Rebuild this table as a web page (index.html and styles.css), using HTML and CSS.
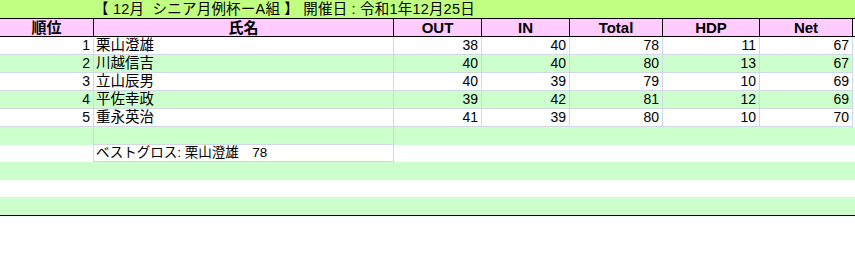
FILE: index.html
```html
<!DOCTYPE html>
<html lang="ja">
<head>
<meta charset="utf-8">
<title>12月 シニア月例杯ーA組</title>
<link rel="stylesheet" href="styles.css">
</head>
<body>
<div class="sheet">
  <div class="title"><span class="title-text">【 12月&nbsp; シニア月例杯ーA組 】 開催日 : 令和1年12月25日</span></div>
  <div class="row head">
    <div class="c">順位</div>
    <div class="c">氏名</div>
    <div class="c">OUT</div>
    <div class="c">IN</div>
    <div class="c">Total</div>
    <div class="c">HDP</div>
    <div class="c">Net</div>
  </div>
  <div class="row data">
    <div class="c num">1</div><div class="c name">栗山澄雄</div><div class="c num">38</div><div class="c num">40</div><div class="c num">78</div><div class="c num">11</div><div class="c num">67</div>
  </div>
  <div class="row data alt">
    <div class="c num">2</div><div class="c name">川越信吉</div><div class="c num">40</div><div class="c num">40</div><div class="c num">80</div><div class="c num">13</div><div class="c num">67</div>
  </div>
  <div class="row data">
    <div class="c num">3</div><div class="c name">立山辰男</div><div class="c num">40</div><div class="c num">39</div><div class="c num">79</div><div class="c num">10</div><div class="c num">69</div>
  </div>
  <div class="row data alt">
    <div class="c num">4</div><div class="c name">平佐幸政</div><div class="c num">39</div><div class="c num">42</div><div class="c num">81</div><div class="c num">12</div><div class="c num">69</div>
  </div>
  <div class="row data">
    <div class="c num">5</div><div class="c name">重永英治</div><div class="c num">41</div><div class="c num">39</div><div class="c num">80</div><div class="c num">10</div><div class="c num">70</div>
  </div>
  <div class="row extra band tall">
    <div class="c rank-gap"></div><div class="c name boxed"></div>
  </div>
  <div class="row extra short">
    <div class="c rank-gap"></div><div class="c name boxed best">ベストグロス: 栗山澄雄　78</div>
  </div>
  <div class="row extra band tall"></div>
  <div class="row extra short"></div>
  <div class="row extra band tall last"></div>
</div>
</body>
</html>
```

FILE: styles.css
```css
html, body {
  margin: 0;
  padding: 0;
  background: #ffffff;
}

body {
  font-family: "Liberation Sans", "Noto Sans CJK JP", sans-serif;
  font-size: 14px;
  color: #000000;
}

.sheet {
  width: 855px;
}

.title {
  height: 18px;
  background: #c0ff80;
  padding-left: 94px;
  line-height: 18px;
  white-space: nowrap;
}

.title-text {
  font-size: 14.5px;
  letter-spacing: 0.2px;
}

.row {
  display: grid;
  grid-template-columns: 94px 300px 88px 88px 93px 97px 93px;
}

.c {
  box-sizing: border-box;
  white-space: nowrap;
  overflow: hidden;
}

.head {
  height: 19px;
  border-top: 1px solid #000;
  border-bottom: 1px solid #000;
  box-sizing: border-box;
}

.head .c {
  background: #ffccff;
  border-right: 1px solid #000;
  text-align: center;
  font-weight: bold;
  font-size: 15px;
  line-height: 17px;
}

.data {
  height: 18px;
}

.data .c {
  border-right: 1px solid #d0d7e5;
  border-bottom: 1px solid #d0d7e5;
  line-height: 17px;
  background: #ffffff;
}

.data.alt .c {
  background: #ccffcc;
}

.num {
  text-align: right;
  padding-right: 3px;
}

.name {
  text-align: left;
  padding-left: 2px;
  font-size: 14.5px;
}

.extra .c {
  border-right: 1px solid #d0d7e5;
}

.extra .boxed {
  border-bottom: 1px solid #d0d7e5;
  line-height: 16px;
}

.best {
  font-size: 13.5px;
}

.band {
  background: #ccffcc;
}

.tall {
  height: 18px;
}

.short {
  height: 17px;
}

.last {
  border-bottom: 1px solid #000;
}
```
